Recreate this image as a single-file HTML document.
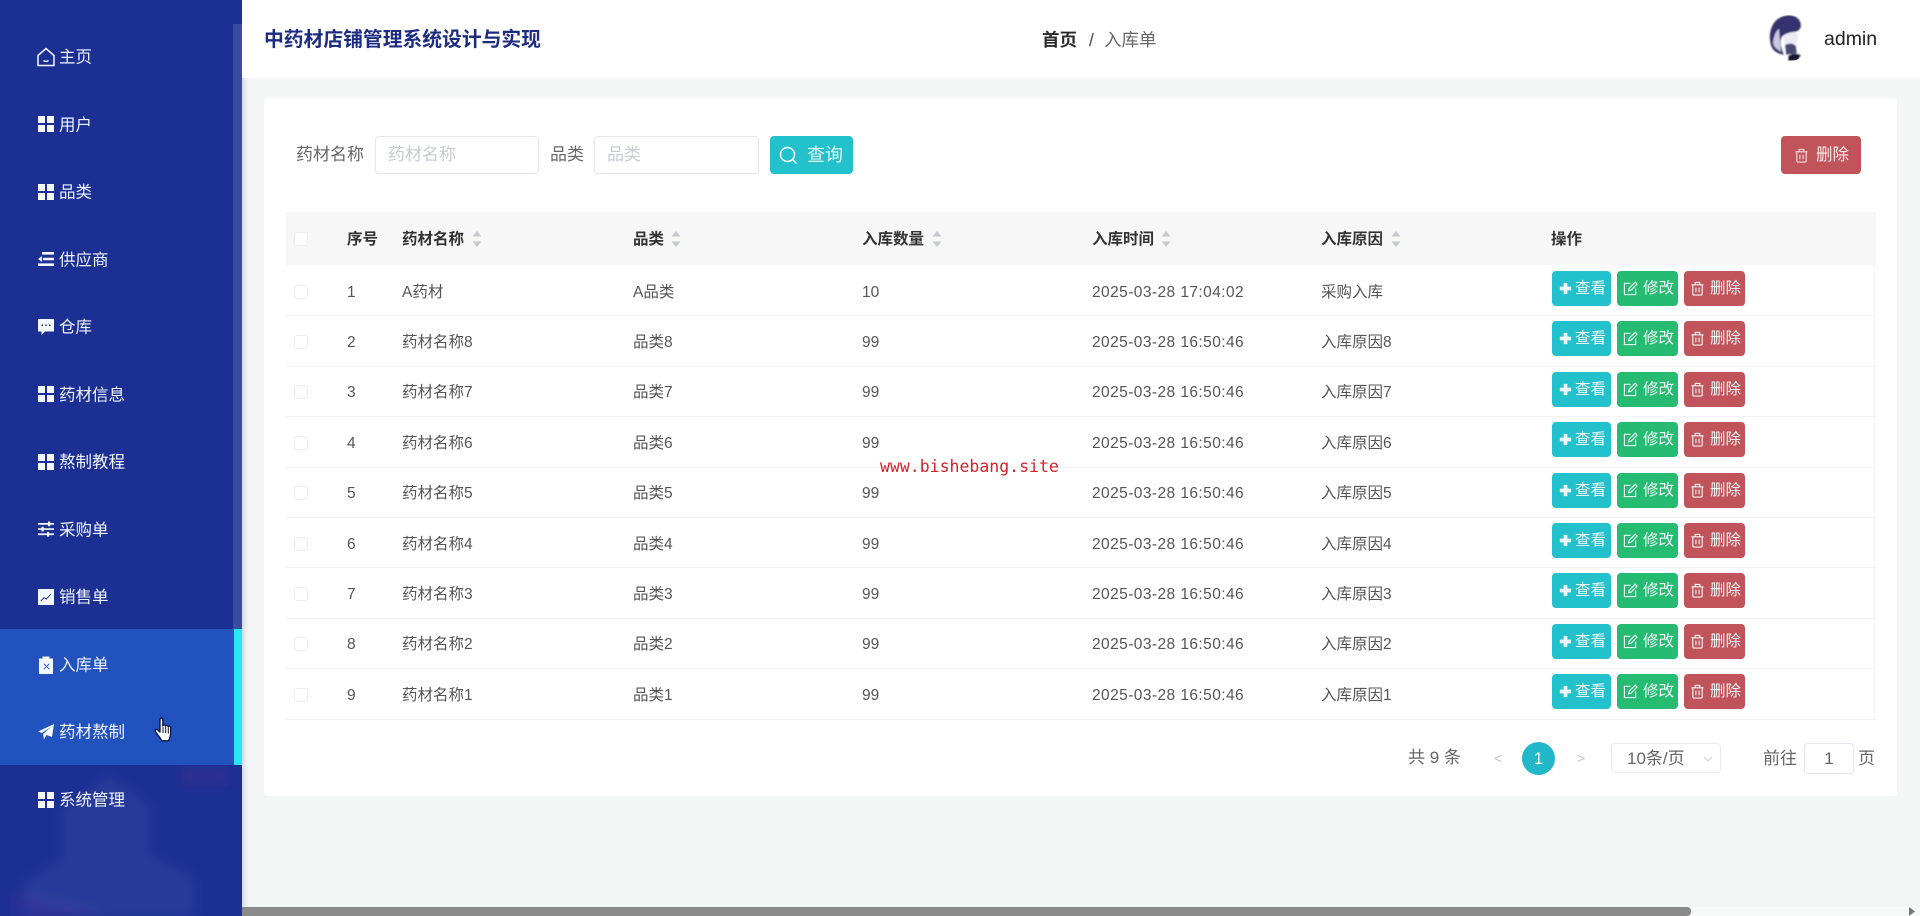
<!DOCTYPE html>
<html lang="zh-CN">
<head>
<meta charset="utf-8">
<title>入库单</title>
<style>
*{box-sizing:border-box;margin:0;padding:0}
html,body{width:1920px;height:916px;overflow:hidden;background:#f4f6f6;font-family:"Liberation Sans","Noto Sans CJK SC",sans-serif;color:#444}
body{filter:blur(.35px)}
.a{position:absolute;white-space:nowrap}
#side{position:absolute;left:0;top:0;width:242px;height:916px;background:#1c2f93;overflow:hidden;box-shadow:2px 0 5px rgba(30,40,120,.18)}
#side .sb{position:absolute;left:233px;top:24px;width:9px;height:605px;background:#3a4c9e}
#side .act{position:absolute;left:0;top:629px;width:242px;height:136px;background:#2152bd}
#side .cy{position:absolute;left:234px;top:629px;width:8px;height:136px;background:#2ae6f5}
.m{position:absolute;left:59px;font-size:16.5px;line-height:24px;color:#f0f4ff;white-space:nowrap;transform:translateY(-11.5px)}
.mi{position:absolute;left:38px;width:16px;height:16px;color:#f4f8ff;transform:translateY(-8px)}
#head{position:absolute;left:242px;top:0;width:1678px;height:78px;background:#fff}
#card{position:absolute;left:264px;top:98px;width:1633px;height:698px;background:#fff;border-radius:3px}
.lab{font-size:17px;line-height:38px;top:136px;color:#666}
.inp{position:absolute;top:136px;height:38px;background:#fff;border:1px solid #e4e7ed;border-radius:4px;font-size:17px;line-height:36px;color:#c8cbd2;padding-left:12px;white-space:nowrap}
.btn{position:absolute;border-radius:4px;color:#f4fbfb;white-space:nowrap}
#th{position:absolute;left:286px;top:212px;width:1590px;height:53px;background:#f7f7f8}
.h{position:absolute;top:227.500px;font-size:15.5px;line-height:24px;font-weight:700;color:#333;white-space:nowrap}
.ck{position:absolute;left:294px;width:14px;height:14px;background:#fff;border:1px solid #ebedf0;border-radius:3px}
.car{position:absolute;top:231px;width:10px;height:16px}
.r{position:absolute;left:286px;width:1590px;height:50.4px;border-bottom:1px solid #f1f2f3;top:calc(266px + var(--i)*50.4px)}
.r span{position:absolute;top:14.5px;line-height:24px;font-size:15.5px;color:#555;white-space:nowrap}
.r .n{left:61px}.r .c1{left:116px}.r .c2{left:347px}.r .c3{left:576px}.r .c4{left:806px;letter-spacing:.43px}.r .c5{left:1035px}
.r i{position:absolute;left:8px;top:18.5px;width:14px;height:14px;background:#fff;border:1px solid #ebedf0;border-radius:3px}
.r b{position:absolute;top:5px;height:35px;border-radius:4px;font-weight:400;font-size:15.5px;line-height:35px;color:#edf7f7;white-space:nowrap}
.r b svg{position:absolute;top:10px;left:6px;width:15px;height:15px}
.r b em{position:absolute;font-style:normal;left:23px;top:0}
.b1{left:1266px;width:59px;background:#22c1cb}
.b2{left:1331px;width:61px;background:#25bc72}
.b3{left:1398px;width:61px;background:#c0545a}
.pg{position:absolute;font-size:17px;line-height:24px;color:#666;white-space:nowrap}
</style>
</head>
<body>
<svg width="0" height="0" style="position:absolute">
<defs>
<symbol id="grid" viewBox="0 0 16 16"><path fill="currentColor" d="M0 0h7v7H0zM9 0h7v7H9zM0 9h7v7H0zM9 9h7v7H9z"/></symbol>
<symbol id="trash" viewBox="0 0 16 16"><path fill="none" stroke="currentColor" stroke-width="1.2" d="M1.5 4h13M5.500 4V1.500h5V4M3 4v9.500c0 .8.6 1.500 1.400 1.500h7.200c.8 0 1.400-.7 1.400-1.500V4M6.300 7v5M9.700 7v5"/></symbol>
<symbol id="edit" viewBox="0 0 16 16"><path fill="none" stroke="currentColor" stroke-width="1.2" d="M13.500 8v6.500h-12v-12H8M6 10.500l.6-2.800L13 1.300l2 2-6.300 6.400z"/></symbol>
<symbol id="plus" viewBox="0 0 16 16"><path fill="currentColor" d="M6 2h4v4h4v4h-4v4H6v-4H2V6h4z"/></symbol>
</defs>
</svg>

<div id="side">
<svg class="a" style="left:0;top:760px" width="242" height="156" viewBox="0 0 242 156">
<defs><filter id="bl"><feGaussianBlur stdDeviation="5"/></filter></defs>
<g filter="url(#bl)">
<polygon points="110,16 150,45 150,95 195,118 195,156 25,156 25,122 62,100 62,50" fill="#fff" opacity=".055"/>
<polygon points="10,130 110,156 10,156" fill="#6a2aa0" opacity=".16"/>
<rect x="182" y="6" width="46" height="20" fill="#b03070" opacity=".1"/>
</g>
</svg>
<div class="sb"></div>
<div class="act"></div>
<div class="cy"></div>

<svg class="mi" style="top:56.500px;left:37px;width:18px;height:20px;transform:translateY(-10px)" viewBox="0 0 18 20"><path fill="none" stroke="currentColor" stroke-width="1.500" d="M1 8.500 9 1.500l8 7v10H1zM6.500 13.500c1.200 1.200 3.800 1.200 5 0"/></svg>
<div class="m" style="top:57px">主页</div>
<svg class="mi" style="top:124px"><use href="#grid"/></svg>
<div class="m" style="top:125px">用户</div>
<svg class="mi" style="top:192px"><use href="#grid"/></svg>
<div class="m" style="top:192px">品类</div>
<svg class="mi" style="top:259px" viewBox="0 0 16 16"><path fill="currentColor" d="M4 1h12v2.600H4zM5 6.700h11v2.600H5zM0 12.400h16V15H0zM4 5v6L0 8z"/></svg>
<div class="m" style="top:260px">供应商</div>
<svg class="mi" style="top:327px" viewBox="0 0 16 16"><path fill="currentColor" fill-rule="evenodd" d="M0 0h16v12.500H7L3.500 16v-3.500H0zM3.500 5.500v1.500H5V5.500zM7.200 5.500v1.500h1.500V5.500zM11 5.500v1.500h1.500V5.500z"/></svg>
<div class="m" style="top:327px">仓库</div>
<svg class="mi" style="top:394px"><use href="#grid"/></svg>
<div class="m" style="top:395px">药材信息</div>
<svg class="mi" style="top:462px"><use href="#grid"/></svg>
<div class="m" style="top:462px">熬制教程</div>
<svg class="mi" style="top:529px" viewBox="0 0 16 16"><path fill="currentColor" d="M0 2h16v1.700H0zM0 7.200h16v1.700H0zM0 12.400h16v1.700H0zM10 .5h2.200v4.700H10zM3.500 5.700h2.200v4.700H3.500zM9 10.900h2.200v4.700H9z"/></svg>
<div class="m" style="top:530px">采购单</div>
<svg class="mi" style="top:597px" viewBox="0 0 16 16"><path fill="currentColor" fill-rule="evenodd" d="M0 0h16v16H0zM2.500 11.500l.6.700 3-3 2.200 1.500 4.700-5-.7-.6-4.100 4.400-2.200-1.500z"/></svg>
<div class="m" style="top:597px">销售单</div>
<svg class="mi" style="top:665px;height:18px;transform:translateY(-9px)" viewBox="0 0 16 18"><path fill="currentColor" fill-rule="evenodd" d="M1 2.500h3.500V.5h7v2H15V18H1zM5.500 8l2.500 2.500L5.500 13l.6.6L8.600 11l2.500 2.600.6-.6-2.500-2.500L11.700 8l-.6-.6-2.500 2.500-2.500-2.500z"/></svg>
<div class="m" style="top:665px">入库单</div>
<svg class="mi" style="top:732px" viewBox="0 0 16 16"><path fill="currentColor" d="M16 0 14 13 8.500 11 6 15.500 5 10 13 3 3.800 9 0 7.500z"/></svg>
<div class="m" style="top:732px">药材熬制</div>
<svg class="mi" style="top:800px"><use href="#grid"/></svg>
<div class="m" style="top:800px">系统管理</div>

<svg class="a" style="left:154px;top:717px" width="19" height="25" viewBox="0 0 19 25"><path fill="#fff" stroke="#08123a" stroke-width="1.300" stroke-linejoin="round" d="M6 2.500c0-2 2.800-2 2.800 0V9c.3-1.400 2.700-1.300 2.800.2.400-1.200 2.500-1 2.600.5.500-1 2.400-.7 2.400 1V17c0 3-1.500 4.500-2 6.800H7.500C6.800 21 3.500 18 1.500 14.500c-.9-1.700 1-3 2.400-1.500L6 15z"/><path stroke="#08123a" d="M9 10v6M11.700 10v6M14.300 10.500v6" fill="none"/></svg>
</div>

<div id="head">
<div class="a" style="left:22px;top:25.500px;font-size:19.800px;line-height:28px;font-weight:700;color:#1d2c82">中药材店铺管理系统设计与实现</div>
<div class="a" style="left:800px;top:28px;font-size:17.500px;line-height:24px;font-weight:700;color:#2a2a2a">首页</div>
<div class="a" style="left:847px;top:28px;font-size:17.500px;line-height:24px;color:#444">/</div>
<div class="a" style="left:862px;top:28px;font-size:17.500px;line-height:24px;color:#666">入库单</div>
<svg class="a" style="left:1526px;top:14px" width="42" height="48" viewBox="0 0 42 48">
<defs><clipPath id="av"><circle cx="21" cy="24" r="23"/></clipPath><filter id="av2"><feGaussianBlur stdDeviation=".9"/></filter></defs>
<g clip-path="url(#av)" filter="url(#av2)">
<rect x="0" width="42" height="48" fill="#fff"/>
<path fill="#35326f" d="M2 28C0 15 6 2 20 1c9 0 14 5 13 12-1 3-3 5-7 5l-10 3c-3 2-4 6-3 11l3 9C8 40 3 36 2 28z"/>
<path fill="#c9c8de" d="M5 28c1-7 3-11 6-13l1 12 1 11-4-3C7 34 5 31 5 28z"/>
<path fill="#eceaf4" d="M16 21c3-2 7-3 10-3l5 3-2 8-12 2z"/>
<path fill="#4a4878" d="M17 31c4-2 9-2 11 1l1 7-11 2z"/>
<path fill="#121330" d="M20 42c4-3 9-3 13-1l-3 6H20z"/>
</g>
</svg>
<div class="a" style="left:1582px;top:27px;font-size:19.500px;line-height:24px;color:#222">admin</div>
</div>

<div id="card"></div>

<div class="a lab" style="left:296px">药材名称</div>
<div class="inp" style="left:375px;width:164px">药材名称</div>
<div class="a lab" style="left:550px">品类</div>
<div class="inp" style="left:594px;width:165px">品类</div>
<div class="btn" style="left:770px;top:136px;width:83px;height:38px;background:#22c1cb">
<svg class="a" style="left:9px;top:10px" width="19" height="19" viewBox="0 0 19 19"><circle cx="8.500" cy="8.500" r="7" fill="none" stroke="#fff" stroke-width="1.500"/><path d="m13.500 13.500 4 4" stroke="#fff" stroke-width="1.500"/></svg>
<div class="a" style="left:37px;top:6px;font-size:18px;line-height:26px;color:#e8f8f8">查询</div>
</div>
<div class="btn" style="left:1781px;top:136px;width:80px;height:38px;background:#c0545a">
<svg class="a" style="left:13px;top:12px;color:#f8dcdc" width="15" height="15"><use href="#trash"/></svg>
<div class="a" style="left:35px;top:7px;font-size:16.500px;line-height:24px;color:#fbeaea">删除</div>
</div>

<div id="th"></div>
<div class="ck" style="top:232px"></div>
<div class="h" style="left:347px">序号</div>
<div class="h" style="left:402px">药材名称</div>
<div class="h" style="left:633px">品类</div>
<div class="h" style="left:862px">入库数量</div>
<div class="h" style="left:1092px">入库时间</div>
<div class="h" style="left:1321px">入库原因</div>
<div class="h" style="left:1551px">操作</div>
<svg class="car" style="left:472px" viewBox="0 0 10 16"><path fill="#c6c9cf" d="M5 0l4.500 5.500h-9zM5 16 .5 10.500h9z"/></svg>
<svg class="car" style="left:671px" viewBox="0 0 10 16"><path fill="#c6c9cf" d="M5 0l4.500 5.500h-9zM5 16 .5 10.500h9z"/></svg>
<svg class="car" style="left:932px" viewBox="0 0 10 16"><path fill="#c6c9cf" d="M5 0l4.500 5.500h-9zM5 16 .5 10.500h9z"/></svg>
<svg class="car" style="left:1161px" viewBox="0 0 10 16"><path fill="#c6c9cf" d="M5 0l4.500 5.500h-9zM5 16 .5 10.500h9z"/></svg>
<svg class="car" style="left:1391px" viewBox="0 0 10 16"><path fill="#c6c9cf" d="M5 0l4.500 5.500h-9zM5 16 .5 10.500h9z"/></svg>

<div class="r" style="--i:0"><i></i><span class="n">1</span><span class="c1">A药材</span><span class="c2">A品类</span><span class="c3">10</span><span class="c4">2025-03-28 17:04:02</span><span class="c5">采购入库</span><b class="b1"><svg><use href="#plus"/></svg><em>查看</em></b><b class="b2"><svg><use href="#edit"/></svg><em style="left:26px">修改</em></b><b class="b3"><svg><use href="#trash"/></svg><em style="left:26px">删除</em></b></div>
<div class="r" style="--i:1"><i></i><span class="n">2</span><span class="c1">药材名称8</span><span class="c2">品类8</span><span class="c3">99</span><span class="c4">2025-03-28 16:50:46</span><span class="c5">入库原因8</span><b class="b1"><svg><use href="#plus"/></svg><em>查看</em></b><b class="b2"><svg><use href="#edit"/></svg><em style="left:26px">修改</em></b><b class="b3"><svg><use href="#trash"/></svg><em style="left:26px">删除</em></b></div>
<div class="r" style="--i:2"><i></i><span class="n">3</span><span class="c1">药材名称7</span><span class="c2">品类7</span><span class="c3">99</span><span class="c4">2025-03-28 16:50:46</span><span class="c5">入库原因7</span><b class="b1"><svg><use href="#plus"/></svg><em>查看</em></b><b class="b2"><svg><use href="#edit"/></svg><em style="left:26px">修改</em></b><b class="b3"><svg><use href="#trash"/></svg><em style="left:26px">删除</em></b></div>
<div class="r" style="--i:3"><i></i><span class="n">4</span><span class="c1">药材名称6</span><span class="c2">品类6</span><span class="c3">99</span><span class="c4">2025-03-28 16:50:46</span><span class="c5">入库原因6</span><b class="b1"><svg><use href="#plus"/></svg><em>查看</em></b><b class="b2"><svg><use href="#edit"/></svg><em style="left:26px">修改</em></b><b class="b3"><svg><use href="#trash"/></svg><em style="left:26px">删除</em></b></div>
<div class="r" style="--i:4"><i></i><span class="n">5</span><span class="c1">药材名称5</span><span class="c2">品类5</span><span class="c3">99</span><span class="c4">2025-03-28 16:50:46</span><span class="c5">入库原因5</span><b class="b1"><svg><use href="#plus"/></svg><em>查看</em></b><b class="b2"><svg><use href="#edit"/></svg><em style="left:26px">修改</em></b><b class="b3"><svg><use href="#trash"/></svg><em style="left:26px">删除</em></b></div>
<div class="r" style="--i:5"><i></i><span class="n">6</span><span class="c1">药材名称4</span><span class="c2">品类4</span><span class="c3">99</span><span class="c4">2025-03-28 16:50:46</span><span class="c5">入库原因4</span><b class="b1"><svg><use href="#plus"/></svg><em>查看</em></b><b class="b2"><svg><use href="#edit"/></svg><em style="left:26px">修改</em></b><b class="b3"><svg><use href="#trash"/></svg><em style="left:26px">删除</em></b></div>
<div class="r" style="--i:6"><i></i><span class="n">7</span><span class="c1">药材名称3</span><span class="c2">品类3</span><span class="c3">99</span><span class="c4">2025-03-28 16:50:46</span><span class="c5">入库原因3</span><b class="b1"><svg><use href="#plus"/></svg><em>查看</em></b><b class="b2"><svg><use href="#edit"/></svg><em style="left:26px">修改</em></b><b class="b3"><svg><use href="#trash"/></svg><em style="left:26px">删除</em></b></div>
<div class="r" style="--i:7"><i></i><span class="n">8</span><span class="c1">药材名称2</span><span class="c2">品类2</span><span class="c3">99</span><span class="c4">2025-03-28 16:50:46</span><span class="c5">入库原因2</span><b class="b1"><svg><use href="#plus"/></svg><em>查看</em></b><b class="b2"><svg><use href="#edit"/></svg><em style="left:26px">修改</em></b><b class="b3"><svg><use href="#trash"/></svg><em style="left:26px">删除</em></b></div>
<div class="r" style="--i:8"><i></i><span class="n">9</span><span class="c1">药材名称1</span><span class="c2">品类1</span><span class="c3">99</span><span class="c4">2025-03-28 16:50:46</span><span class="c5">入库原因1</span><b class="b1"><svg><use href="#plus"/></svg><em>查看</em></b><b class="b2"><svg><use href="#edit"/></svg><em style="left:26px">修改</em></b><b class="b3"><svg><use href="#trash"/></svg><em style="left:26px">删除</em></b></div>
<div class="a" style="left:1874px;top:265px;width:1px;height:455px;background:#f3f4f5"></div>

<div class="a" style="left:880px;top:457px;font-family:'DejaVu Sans Mono','Liberation Mono',monospace;font-size:16.500px;line-height:20px;color:#d4232b">www.bishebang.site</div>

<div class="pg" style="left:1408px;top:746px">共 9 条</div>
<div class="pg" style="left:1494px;top:746px;color:#c0c4cc;font-size:14px">&lt;</div>
<div class="a" style="left:1522px;top:741.500px;width:33px;height:33px;border-radius:50%;background:#22b8c9;color:#fff;text-align:center;font-size:17px;line-height:33px">1</div>
<div class="pg" style="left:1577px;top:746px;color:#c0c4cc;font-size:14px">&gt;</div>
<div class="a" style="left:1611px;top:743px;width:110px;height:30px;background:#fff;border:1px solid #e9ebef;border-radius:4px;font-size:17px;line-height:30px;color:#666;padding-left:15px">10条/页
<svg class="a" style="left:91px;top:12px" width="10" height="7" viewBox="0 0 10 7"><path d="M1 1l4 4 4-4" fill="none" stroke="#d5d8de" stroke-width="1.300"/></svg></div>
<div class="pg" style="left:1763px;top:747px">前往</div>
<div class="a" style="left:1804px;top:743px;width:50px;height:31px;background:#fff;border:1px solid #e4e7ed;border-radius:4px;font-size:17px;line-height:29px;color:#666;text-align:center">1</div>
<div class="pg" style="left:1858px;top:747px">页</div>

<div class="a" style="left:242px;top:907px;width:1678px;height:9px;background:#f7f8f8"></div>
<div class="a" style="left:242px;top:907px;width:1449px;height:9px;background:#8a8a8a;border-radius:0 4px 4px 0"></div>
<svg class="a" style="left:1908px;top:907px" width="8" height="9" viewBox="0 0 8 9"><path d="M1 0l6 4.500L1 9z" fill="#777"/></svg>
</body>
</html>
